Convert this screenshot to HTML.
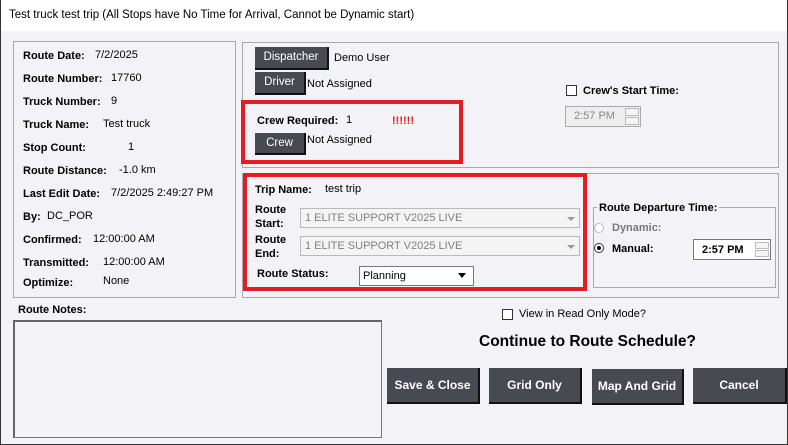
<!DOCTYPE html><html><head><style>
*{margin:0;padding:0;box-sizing:border-box}
body{width:788px;height:445px;background:#f3f2f6;font-family:"Liberation Sans",sans-serif;font-size:11px;color:#000;position:relative;overflow:hidden}
div,span{position:absolute}
.b{font-weight:bold}
.box{border:1px solid #a8a8a8}
.red{border:4px solid #e41c23}
.btn{background:#474a51;color:#fff;border-right:2px solid #111;border-bottom:2px solid #111;text-align:center;font-size:11.5px}
.big{background:#474a51;color:#fff;border-right:2px solid #111;border-bottom:2px solid #111;text-align:center;font-weight:bold;font-size:12px;line-height:34px;height:36px}
.cb{width:11px;height:11px;border:1px solid #333;background:#fff}
.dd{background:#f4f4f4;border:1px solid #b9b9b9;color:#808080;height:20px;line-height:18px;padding-left:4px}
.arr{width:0;height:0;border-left:4px solid transparent;border-right:4px solid transparent;border-top:4px solid #999}
</style></head><body>
<div style="left:0;top:0;width:788px;height:31px;background:#fff"></div>
<span style="left:9px;top:9px;font-size:11.5px">Test truck test trip (All Stops have No Time for Arrival, Cannot be Dynamic start)</span>
<div style="left:0;top:0;width:1px;height:445px;background:#333"></div>
<div style="left:787px;top:0;width:1px;height:445px;background:#333"></div>
<div style="left:0;top:444px;width:788px;height:1px;background:#333"></div>

<div class="box" style="left:13px;top:41px;width:223px;height:257px"></div>
<span class="b" style="left:23px;top:50px">Route Date:</span><span style="left:95px;top:49px">7/2/2025</span>
<span class="b" style="left:23px;top:73px">Route Number:</span><span style="left:111px;top:72px">17760</span>
<span class="b" style="left:23px;top:96px">Truck Number:</span><span style="left:111px;top:95px">9</span>
<span class="b" style="left:23px;top:119px">Truck Name:</span><span style="left:103px;top:118px">Test truck</span>
<span class="b" style="left:23px;top:142px">Stop Count:</span><span style="left:128px;top:141px">1</span>
<span class="b" style="left:23px;top:165px">Route Distance:</span><span style="left:119px;top:164px">-1.0 km</span>
<span class="b" style="left:23px;top:188px">Last Edit Date:</span><span style="left:111px;top:187px">7/2/2025 2:49:27 PM</span>
<span class="b" style="left:23px;top:211px">By:</span><span style="left:47px;top:210px">DC_POR</span>
<span class="b" style="left:23px;top:234px">Confirmed:</span><span style="left:93px;top:233px">12:00:00 AM</span>
<span class="b" style="left:23px;top:257px">Transmitted:</span><span style="left:103px;top:256px">12:00:00 AM</span>
<span class="b" style="left:23px;top:277px">Optimize:</span><span style="left:103px;top:275px">None</span>

<div class="box" style="left:242px;top:42px;width:537px;height:126px"></div>
<div class="btn" style="left:255px;top:47px;width:74px;height:23px;line-height:20px">Dispatcher</div>
<span style="left:334px;top:52px">Demo User</span>
<div class="btn" style="left:255px;top:72px;width:51px;height:23px;line-height:20px">Driver</div>
<span style="left:307px;top:78px">Not Assigned</span>
<div class="red" style="left:241px;top:100px;width:222px;height:64px"></div>
<span class="b" style="left:257px;top:115px">Crew Required:</span><span style="left:346px;top:114px">1</span>
<span class="b" style="left:392px;top:115px;color:#e41c23">!!!!!!</span>
<div class="btn" style="left:255px;top:133px;width:51px;height:22px;line-height:20px">Crew</div>
<span style="left:307px;top:134px">Not Assigned</span>
<div class="cb" style="left:566px;top:85px"></div>
<span class="b" style="left:583px;top:85px">Crew's Start Time:</span>
<div style="left:565px;top:106px;width:76px;height:21px;border:1px solid #aaa;background:#eee;color:#888;padding:3px 0 0 8px">2:57 PM</div>
<div style="left:625px;top:108px;width:14px;height:8px;border:1px solid #bbb;background:#f4f4f4"></div>
<div style="left:625px;top:117px;width:14px;height:8px;border:1px solid #bbb;background:#f4f4f4"></div>

<div class="box" style="left:242px;top:173px;width:537px;height:125px"></div>
<div class="red" style="left:243px;top:173px;width:344px;height:118px"></div>
<span class="b" style="left:255px;top:184px">Trip Name:</span><span style="left:325px;top:183px">test trip</span>
<span class="b" style="left:255px;top:203px;line-height:14px">Route<br>Start:</span>
<div class="dd" style="left:300px;top:208px;width:280px">1 ELITE SUPPORT V2025 LIVE</div>
<div class="arr" style="left:567px;top:217px"></div>
<span class="b" style="left:255px;top:233px;line-height:14px">Route<br>End:</span>
<div class="dd" style="left:300px;top:236px;width:280px">1 ELITE SUPPORT V2025 LIVE</div>
<div class="arr" style="left:567px;top:245px"></div>
<span class="b" style="left:257px;top:268px">Route Status:</span>
<div style="left:359px;top:266px;width:115px;height:20px;border:1px solid #777;background:#fff;padding:3px 0 0 3px">Planning</div>
<div style="left:458px;top:273px;width:0;height:0;border-left:4px solid transparent;border-right:4px solid transparent;border-top:5px solid #000"></div>

<div class="box" style="left:593px;top:207px;width:183px;height:81px"></div>
<span class="b" style="left:597px;top:202px;background:#f3f2f6;padding:0 2px">Route Departure Time:</span>
<div style="left:594px;top:223px;width:10px;height:10px;border:1px solid #bbb;border-radius:50%;background:#fff"></div>
<span class="b" style="left:612px;top:222px;color:#777">Dynamic:</span>
<div style="left:594px;top:243px;width:10px;height:10px;border:1px solid #333;border-radius:50%;background:#fff"><div style="left:2px;top:2px;width:4px;height:4px;background:#000;border-radius:50%"></div></div>
<span class="b" style="left:612px;top:243px">Manual:</span>
<div style="left:693px;top:239px;width:78px;height:21px;border:1px solid #777;background:#fff;padding:4px 0 0 8px" class="b">2:57 PM</div>
<div style="left:755px;top:242px;width:14px;height:7px;border:1px solid #bbb;background:#f4f4f4"></div>
<div style="left:755px;top:250px;width:14px;height:7px;border:1px solid #bbb;background:#f4f4f4"></div>

<span class="b" style="left:18px;top:304px">Route Notes:</span>
<div style="left:13px;top:320px;width:369px;height:118px;border:1px solid #777;border-top:2px solid #666;border-left:2px solid #666;background:#f3f2f6"></div>
<div class="cb" style="left:502px;top:309px"></div>
<span style="left:519px;top:308px">View in Read Only Mode?</span>
<span class="b" style="left:479px;top:333px;font-size:15.5px">Continue to Route Schedule?</span>
<div class="big" style="left:387px;top:368px;width:93px">Save &amp; Close</div>
<div class="big" style="left:489px;top:368px;width:93px">Grid Only</div>
<div class="big" style="left:592px;top:369px;width:92px">Map And Grid</div>
<div class="big" style="left:693px;top:368px;width:94px">Cancel</div>
</body></html>
